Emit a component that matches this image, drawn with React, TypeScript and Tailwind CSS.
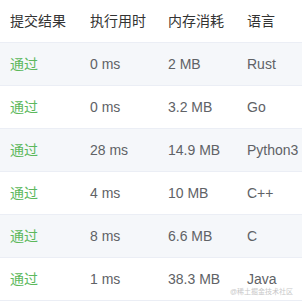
const rows = [
  { time: "0 ms", mem: "2 MB", lang: "Rust" },
  { time: "0 ms", mem: "3.2 MB", lang: "Go" },
  { time: "28 ms", mem: "14.9 MB", lang: "Python3" },
  { time: "4 ms", mem: "10 MB", lang: "C++" },
  { time: "8 ms", mem: "6.6 MB", lang: "C" },
  { time: "1 ms", mem: "38.3 MB", lang: "Java" },
];

export default function App() {
  return (
    <div
      className="relative w-[302px] h-[303px] bg-white overflow-hidden text-[14px]"
      style={{ fontFamily: '"Liberation Sans", "Noto Sans CJK SC", sans-serif' }}
    >
      {/* Header */}
      <div className="flex h-[43px] items-center border-b border-[#ebeef5] text-[#333]">
        <div className="w-[80px] pl-[10px]">提交结果</div>
        <div className="w-[78px] pl-[10px]">执行用时</div>
        <div className="w-[79px] pl-[10px]">内存消耗</div>
        <div className="flex-1 pl-[10px]">语言</div>
      </div>

      {/* Rows */}
      {rows.map((r, i) => (
        <div
          key={i}
          className={
            i % 2 === 0
              ? "flex h-[43px] items-center border-b border-[#ebeef5] bg-[#f5f7fa] text-[#606266]"
              : "flex h-[43px] items-center border-b border-[#ebeef5] bg-white text-[#606266]"
          }
        >
          <div className="w-[80px] pl-[10px] text-[#5cb85c]">通过</div>
          <div className="w-[78px] pl-[10px]">{r.time}</div>
          <div className="w-[79px] pl-[10px]">{r.mem}</div>
          <div className="flex-1 pl-[10px]">{r.lang}</div>
        </div>
      ))}

      {/* Watermark */}
      <div className="absolute right-[9px] top-[288px] text-[7px] leading-none text-[#c8c8c8]">
        @稀土掘金技术社区
      </div>
    </div>
  );
}
